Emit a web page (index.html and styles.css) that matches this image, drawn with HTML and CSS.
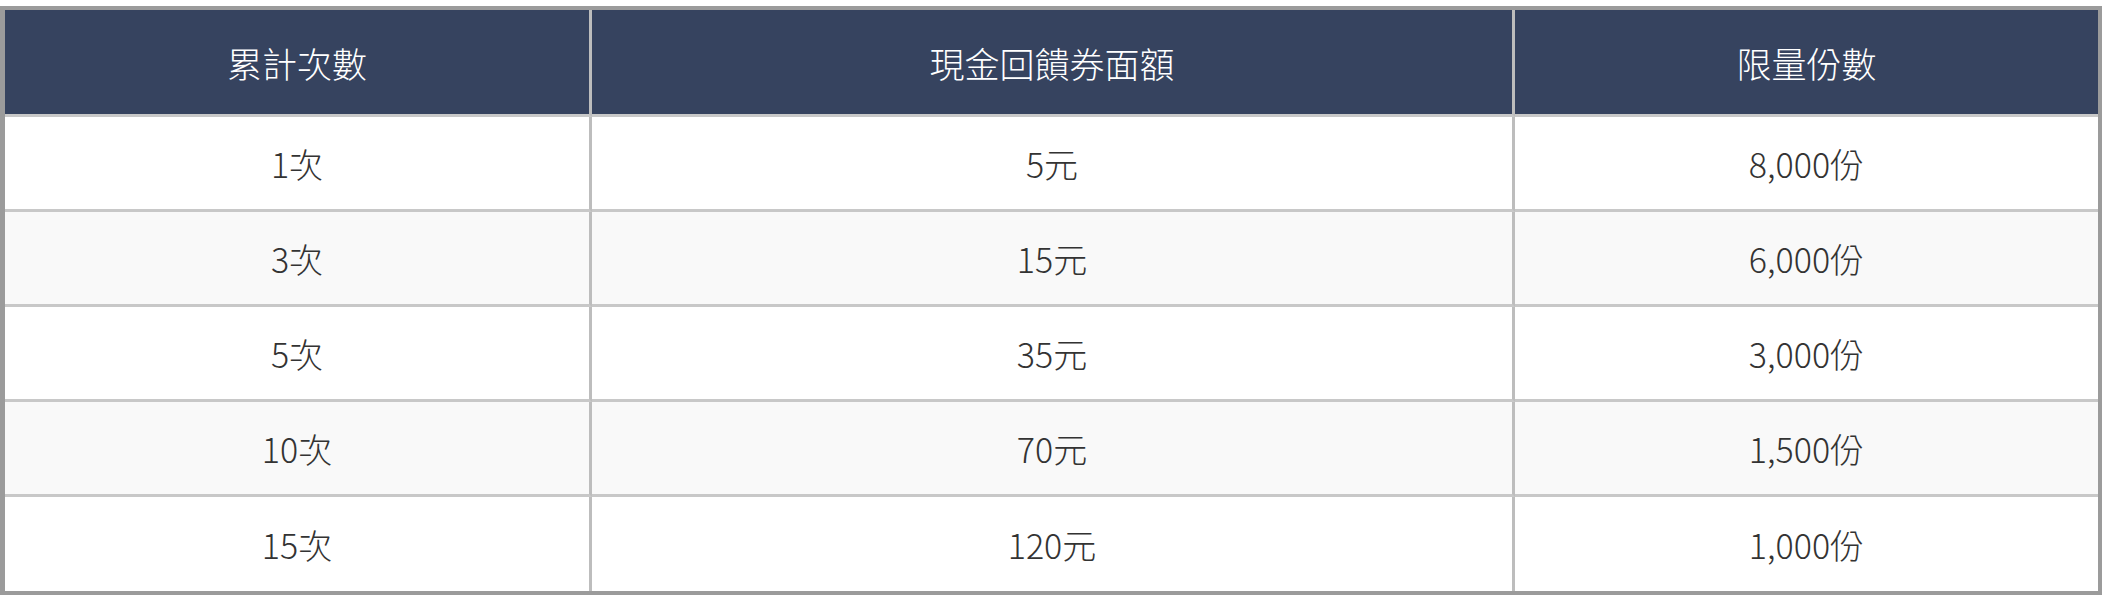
FILE: index.html
```html
<!DOCTYPE html>
<html lang="zh-Hant">
<head>
<meta charset="utf-8">
<title>現金回饋券</title>
<link rel="stylesheet" href="styles.css">
</head>
<body>
<div class="wrap">
<table class="reward">
  <colgroup>
    <col class="c1">
    <col class="c2">
    <col class="c3">
  </colgroup>
  <thead>
    <tr class="head">
      <th>累計次數</th>
      <th>現金回饋券面額</th>
      <th>限量份數</th>
    </tr>
  </thead>
  <tbody>
    <tr><td>1次</td><td>5元</td><td>8,000份</td></tr>
    <tr class="alt"><td>3次</td><td>15元</td><td>6,000份</td></tr>
    <tr><td>5次</td><td>35元</td><td>3,000份</td></tr>
    <tr class="alt"><td>10次</td><td>70元</td><td>1,500份</td></tr>
    <tr class="last"><td>15次</td><td>120元</td><td>1,000份</td></tr>
  </tbody>
</table>
</div>
</body>
</html>
```

FILE: styles.css
```css
html, body {
  margin: 0;
  padding: 0;
  background: #ffffff;
}

.wrap {
  padding-top: 6px;
}

.reward {
  width: 2102px;
  box-sizing: border-box;
  table-layout: fixed;
  border-collapse: separate;
  border-spacing: 0;
  border-style: solid;
  border-color: #9b9b9b;
  border-width: 4px 4px 4px 5px;
  font-family: "Noto Sans CJK TC", "Noto Sans", sans-serif;
}

.c1 { width: 587px; }
.c2 { width: 923px; }
.c3 { width: 583px; }

.reward th,
.reward td {
  box-sizing: border-box;
  padding: 0;
  text-align: center;
  vertical-align: middle;
  border-right: 3px solid #bdbdbd;
  border-bottom: 3px solid #c8c8c8;
}

.reward th:last-child,
.reward td:last-child {
  border-right: none;
}

.head {
  height: 107px;
}

.reward th {
  background: #36435f;
  color: #ffffff;
  font-size: 35px;
  font-weight: 300;
  border-bottom-color: #c8c8c8;
}

.reward td {
  height: 95px;
  color: #333333;
  font-size: 34px;
  font-weight: 300;
  background: #ffffff;
}

.reward tr.alt td {
  background: #f9f9f9;
}

.reward tr.last td {
  border-bottom: none;
  height: 94px;
}
```
